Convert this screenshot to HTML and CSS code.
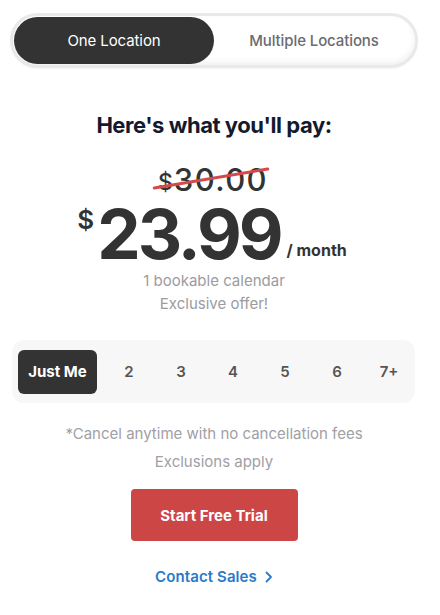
FILE: index.html
```html
<!DOCTYPE html>
<html>
<head>
<meta charset="utf-8">
<link rel="stylesheet" href="styles.css">
</head>
<body>
<div class="page">
  <div class="toggle">
    <div class="toggle-opt active">One Location</div>
    <div class="toggle-opt">Multiple Locations</div>
  </div>

  <h2 class="heading">Here's what you'll pay:</h2>

  <div class="old-price">
    <span class="old-cur">$</span><span class="old-num">30.00</span>
    <span class="strike"></span>
  </div>

  <div class="price">
    <span class="cur">$</span><span class="amount">23.99</span><span class="per">/ month</span>
  </div>

  <p class="sub">1 bookable calendar</p>
  <p class="sub">Exclusive offer!</p>

  <div class="seats">
    <div class="seat active">Just Me</div>
    <div class="seat">2</div>
    <div class="seat">3</div>
    <div class="seat">4</div>
    <div class="seat">5</div>
    <div class="seat">6</div>
    <div class="seat">7+</div>
  </div>

  <p class="note first">*Cancel anytime with no cancellation fees</p>
  <p class="note">Exclusions apply</p>

  <div class="cta-wrap"><a class="cta">Start Free Trial</a></div>

  <div class="contact-wrap">
    <a class="contact">Contact Sales
      <svg class="chev" width="8" height="12" viewBox="0 0 8 12"><path d="M1.5 1.5 L6 6 L1.5 10.5" fill="none" stroke="currentColor" stroke-width="1.8" stroke-linecap="round" stroke-linejoin="round"/></svg>
    </a>
  </div>
</div>
</body>
</html>
```

FILE: styles.css
```css
* { box-sizing: border-box; }
html, body { margin: 0; padding: 0; background: #fff; }
body {
  font-family: Inter, "Liberation Sans", sans-serif;
  color: #333;
  width: 440px;
}
.page {
  width: 408px;
  margin-left: 10px;
  padding-top: 13px;
}
.toggle {
  display: flex;
  height: 55px;
  border: 3px solid #e9e9e9;
  border-radius: 28px;
  padding: 1px;
  background: #fff;
  box-shadow: inset 0 -3px 6px rgba(0,0,0,0.06), 0 1px 2px rgba(0,0,0,0.04);
}
.toggle-opt {
  flex: 1;
  display: flex;
  align-items: center;
  justify-content: center;
  border-radius: 24px;
  font-size: 15px;
  font-weight: 500;
  color: #6b6b70;
  letter-spacing: -0.1px;
}
.toggle-opt.active {
  background: #333333;
  color: #fff;
  font-weight: 400;
}
.heading {
  margin: 44px 0 0;
  text-align: center;
  font-size: 22px;
  line-height: 26px;
  font-weight: 700;
  color: #141a2e;
  letter-spacing: -0.45px;
}
.old-price {
  position: relative;
  width: 116px;
  margin: 27px auto 0;
  height: 30px;
  text-align: center;
  line-height: 30px;
  color: #333;
  white-space: nowrap;
  padding-right: 2px;
}
.old-cur { font-size: 23px; font-weight: 500; vertical-align: 1px; margin-right: 1px; }
.old-num { font-size: 31px; font-weight: 500; letter-spacing: 1.4px; }
.strike {
  position: absolute;
  left: -4px;
  top: 12px;
  width: 118px;
  height: 3px;
  background: #d44a4a;
  border-radius: 2px;
  transform: rotate(-9.5deg);
}
.price {
  display: flex;
  justify-content: center;
  align-items: flex-start;
  margin-top: 4px;
  height: 70px;
  padding-right: 4px;
  color: #333;
}
.cur {
  font-size: 26px;
  font-weight: 600;
  line-height: 26px;
  margin-top: 8px;
  margin-right: 3px;
}
.amount {
  font-size: 69px;
  font-weight: 700;
  line-height: 70px;
  letter-spacing: -3px;
}
.per {
  font-size: 16px;
  font-weight: 700;
  align-self: flex-end;
  margin-left: 6px;
  margin-bottom: 9px;
  color: #333;
}
.sub {
  margin: 0;
  text-align: center;
  font-size: 15px;
  line-height: 23px;
  color: #9b9ba0;
}
.seats {
  display: flex;
  align-items: center;
  margin: 25px 3px 0 2px;
  height: 63px;
  padding: 0 0 0 6px;
  background: #f7f7f7;
  border-radius: 12px;
}
.seat {
  flex: 1;
  text-align: center;
  font-size: 15px;
  font-weight: 600;
  color: #555;
}
.seat.active {
  flex: 0 0 79px;
  height: 44px;
  line-height: 44px;
  margin-right: 6px;
  background: #333;
  color: #fff;
  border-radius: 6px;
  font-weight: 700;
}
.note {
  margin: 0;
  text-align: center;
  font-size: 15px;
  line-height: 28px;
  color: #a0a0a6;
}
.note.first { margin-top: 17px; }
.cta-wrap {
  display: flex;
  justify-content: center;
  margin-top: 13px;
}
.cta {
  display: flex;
  align-items: center;
  justify-content: center;
  width: 167px;
  height: 52px;
  background: #cc4646;
  color: #fff;
  border-radius: 4px;
  font-size: 15px;
  font-weight: 700;
}
.contact-wrap {
  display: flex;
  justify-content: center;
  margin-top: 26px;
}
.contact {
  display: flex;
  align-items: center;
  gap: 8px;
  color: #2a7ac9;
  font-size: 15px;
  font-weight: 600;
  line-height: 20px;
  letter-spacing: 0.1px;
}
.chev { display: block; }
```
